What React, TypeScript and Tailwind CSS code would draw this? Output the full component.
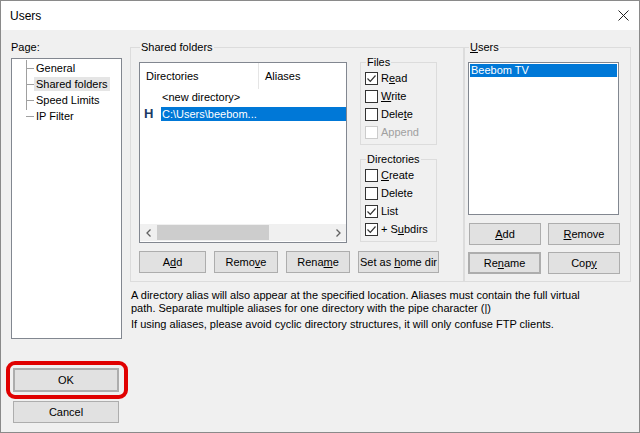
import React from "react";

const U = ({ c }: { c: string }) => <span className="underline">{c}</span>;

function Btn({
  children,
  className = "",
}: {
  children: React.ReactNode;
  className?: string;
}) {
  return (
    <div
      className={
        "h-[22px] flex items-center justify-center bg-[#e1e1e1] border border-[#adadad] text-[11px] text-black " +
        className
      }
    >
      <span className="whitespace-pre">{children}</span>
    </div>
  );
}

function Check({
  checked = false,
  disabled = false,
  children,
}: {
  checked?: boolean;
  disabled?: boolean;
  children: React.ReactNode;
}) {
  return (
    <div className="h-[18px] flex items-center gap-[3px]">
      <div
        className={
          "w-[13px] h-[13px] border bg-white flex items-center justify-center " +
          (disabled ? "border-[#cccccc]" : "border-[#333333]")
        }
      >
        {checked && (
          <svg width="11" height="11" viewBox="0 0 11 11">
            <path d="M1.5 5.5 L4.3 8.3 L9.5 2.5" fill="none" stroke="#333" strokeWidth="1.2" />
          </svg>
        )}
      </div>
      <span className={"text-[11px] " + (disabled ? "text-[#a0a0a0]" : "text-black")}>
        {children}
      </span>
    </div>
  );
}

function Group({
  label,
  className = "",
  children,
}: {
  label: React.ReactNode;
  className?: string;
  children: React.ReactNode;
}) {
  return (
    <fieldset className={"border border-[#dcdcdc] " + className}>
      <legend className="text-[11px] leading-[14px] text-black px-[1px] ml-[1px]">{label}</legend>
      {children}
    </fieldset>
  );
}

export default function App() {
  return (
    <div
      className="w-[640px] h-[433px] bg-[#f0f0f0] border border-[#8a8a8a] flex flex-col overflow-hidden text-black"
      style={{ fontFamily: '"Liberation Sans", Arial, sans-serif' }}
    >
      {/* title bar */}
      <div className="h-[29px] bg-white flex items-center justify-between pl-[9px] pr-[10px] shrink-0">
        <span className="text-[12px]">Users</span>
        <svg width="11" height="11" viewBox="0 0 11 11">
          <path d="M0.5 0.5 L10.5 10.5 M10.5 0.5 L0.5 10.5" stroke="#222" strokeWidth="1" />
        </svg>
      </div>

      <div className="flex flex-1">
        {/* left column */}
        <div className="w-[129px] pl-[10px] pt-[10px] flex flex-col">
          <div className="text-[11px] leading-[14px]">Page:</div>
          <div className="mt-[4px] w-[111px] h-[281px] bg-white border border-[#828790] pt-[1px]">
            <div className="relative pl-[14px]">
              <div className="absolute left-[14px] top-[0px] h-[50px] border-l border-[#a0a0a0]" />
              {["General", "Shared folders", "Speed Limits", "IP Filter"].map((t, i) => (
                <div key={t} className="h-[16px] flex items-center">
                  <div className="w-[8px] border-t border-[#a0a0a0]" />
                  <span
                    className={
                      "text-[11px] px-[2px] leading-[14px] " + (i === 1 ? "bg-[#e5e5e5]" : "")
                    }
                  >
                    {t}
                  </span>
                </div>
              ))}
            </div>
          </div>
          <div className="mt-[22px] ml-[-5px] w-[122px] p-[3px] border-[4px] border-[#e00000] rounded-[9px]">
            <Btn className="w-[106px] h-[24px] border-[2px] border-[#0078d7]">OK</Btn>
          </div>
          <Btn className="mt-[2px] w-[106px] ml-[2px]">Cancel</Btn>
        </div>

        {/* right column */}
        <div className="flex flex-col pt-[10px]">
          <div className="flex">
            <Group label="Shared folders" className="w-[333px] h-[242px] pl-[8px] pr-[24px]">
              <div className="flex gap-[13px] mt-[1px]">
                <div className="mt-[7px] w-[208px] h-[181px] bg-white border border-[#828790] flex flex-col">
                  <div className="h-[26px] flex items-center text-[11px]">
                    <div className="w-[119px] pl-[6px] h-full flex items-center border-r border-[#e5e5e5]">
                      Directories
                    </div>
                    <div className="pl-[6px]">Aliases</div>
                  </div>
                  <div className="pl-[22px] text-[11px] leading-[14px] mt-[1px]">
                    &lt;new directory&gt;
                  </div>
                  <div className="flex items-center mt-[3px] pl-[4px]">
                    <span className="text-[13px] font-bold text-[#1a3a66] w-[17px] leading-[14px]">
                      H
                    </span>
                    <div className="flex-1 bg-[#0078d7] text-white text-[11px] leading-[14px] px-[1px]">
                      C:\Users\beebom...
                    </div>
                  </div>
                  <div className="flex-1" />
                  <div className="h-[17px] mb-[1px] flex items-center bg-[#f0f0f0] text-[#606060] text-[10px]">
                    <div className="w-[17px] flex justify-center">
                      <svg width="6" height="8" viewBox="0 0 6 8">
                        <path d="M4.5 0.5 L1 4 L4.5 7.5" fill="none" stroke="#606060" strokeWidth="1.3" />
                      </svg>
                    </div>
                    <div className="w-[112px] h-[15px] bg-[#cdcdcd]" />
                    <div className="flex-1" />
                    <div className="w-[17px] flex justify-center">
                      <svg width="6" height="8" viewBox="0 0 6 8">
                        <path d="M1.5 0.5 L5 4 L1.5 7.5" fill="none" stroke="#606060" strokeWidth="1.3" />
                      </svg>
                    </div>
                  </div>
                </div>

                <div className="w-[77px] flex flex-col">
                  <Group label="Files" className="h-[90px] pl-[4px]">
                    <Check checked>
                      R<U c="e" />ad
                    </Check>
                    <Check>
                      <U c="W" />rite
                    </Check>
                    <Check>
                      Dele<U c="t" />e
                    </Check>
                    <Check disabled>Append</Check>
                  </Group>
                  <Group label="Directories" className="h-[90px] mt-[7px] pl-[4px]">
                    <Check>
                      <U c="C" />reate
                    </Check>
                    <Check>Delete</Check>
                    <Check checked>List</Check>
                    <Check checked>
                      + S<U c="u" />bdirs
                    </Check>
                  </Group>
                </div>
              </div>
              <div className="flex gap-[8px] mt-[8px]">
                <Btn className="w-[67px]">
                  A<U c="d" />d
                </Btn>
                <Btn className="w-[64px]">
                  Remo<U c="v" />e
                </Btn>
                <Btn className="w-[64px]">
                  Rena<U c="m" />e
                </Btn>
                <Btn className="w-[81px]">
                  {"Set as "}
                  <U c="h" />
                  {"ome dir"}
                </Btn>
              </div>
            </Group>

            <Group
              label={
                <>
                  <U c="U" />
                  sers
                </>
              }
              className="w-[167px] h-[242px] pl-[3px]"
            >
              <div className="mt-[8px] w-[151px] h-[153px] bg-white border border-[#828790] pt-[1px] px-[1px]">
                <div className="bg-[#0078d7] text-white text-[11px] leading-[13px] pl-[1px]">
                  Beebom TV
                </div>
              </div>
              <div className="flex gap-[7px] mt-[8px] pl-[1px]">
                <Btn className="w-[72px]">
                  <U c="A" />dd
                </Btn>
                <Btn className="w-[72px]">
                  <U c="R" />emove
                </Btn>
              </div>
              <div className="flex gap-[7px] mt-[7px]">
                <Btn className="w-[73px] border-[2px] border-[#333333]">
                  Re<U c="n" />ame
                </Btn>
                <Btn className="w-[72px]">
                  Cop<U c="y" />
                </Btn>
              </div>
            </Group>
          </div>

          <div className="text-[11px] leading-[13px] mt-[7px] pl-[1px] w-[470px]">
            <p>
              A directory alias will also appear at the specified location. Aliases must contain the
              full virtual path. Separate multiple aliases for one directory with the pipe character (|)
            </p>
            <p className="mt-[3px]">
              If using aliases, please avoid cyclic directory structures, it will only confuse FTP
              clients.
            </p>
          </div>
        </div>
      </div>
    </div>
  );
}
